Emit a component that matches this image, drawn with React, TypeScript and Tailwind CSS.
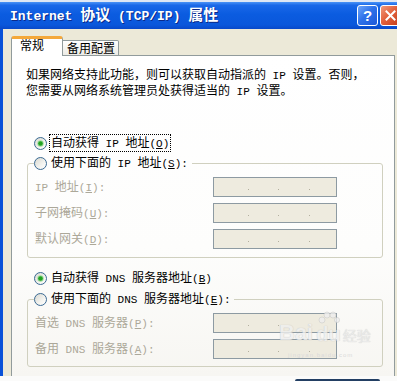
import React from "react";

const M = ({ children }: { children: React.ReactNode }) => (
  <span className="font-['Liberation_Mono',monospace] text-[11px]">{children}</span>
);

const Acc = ({ k, colon }: { k: string; colon?: boolean }) => (
  <span className="font-['Liberation_Mono',monospace] text-[11px]">
    (<span className="underline underline-offset-1">{k}</span>){colon ? ":" : ""}
  </span>
);

function Radio({ checked }: { checked?: boolean }) {
  return (
    <svg width="13" height="13" viewBox="0 0 13 13" className="shrink-0">
      <defs>
        <linearGradient id="rgrad" x1="0" y1="0" x2="1" y2="1">
          <stop offset="0" stopColor="#d6d6ce" />
          <stop offset="0.6" stopColor="#f4f4f0" />
          <stop offset="1" stopColor="#ffffff" />
        </linearGradient>
      </defs>
      <circle cx="6.5" cy="6.5" r="6" fill="url(#rgrad)" stroke="#3b6a93" strokeWidth="1" />
      {checked && (
        <>
          <circle cx="6.5" cy="6.5" r="3.2" fill="#9fdb9f" />
          <circle cx="6.5" cy="6.5" r="2.3" fill="#22a322" />
        </>
      )}
    </svg>
  );
}

function IpBox() {
  return (
    <div className="w-[124px] h-[20px] shrink-0 border border-[#8d9aa2] bg-[#eeebdf] flex items-center pt-[4px]">
      <span className="w-[34px]" />
      <span className="w-px h-px bg-[#b3af9e]" />
      <span className="w-[29px]" />
      <span className="w-px h-px bg-[#b3af9e]" />
      <span className="w-[30px]" />
      <span className="w-px h-px bg-[#b3af9e]" />
    </div>
  );
}

function Field({ label }: { label: React.ReactNode }) {
  return (
    <div className="flex items-center h-[20px]">
      <div className="w-[179px] pl-px text-[#aca899] whitespace-nowrap leading-[14px]">{label}</div>
      <IpBox />
    </div>
  );
}

export default function App() {
  return (
    <div className="w-[397px] h-[381px] overflow-hidden relative flex flex-col bg-[#ece9d8] font-['Noto_Sans_CJK_SC',sans-serif] text-[12px] text-black">
      {/* top edge */}
      <div className="h-[2px] bg-[#dfe7f4] shrink-0" />
      {/* title bar */}
      <div className="h-[27px] shrink-0 flex items-center pl-[10px] bg-[linear-gradient(to_bottom,#4a93f6_0%,#1a68e8_12%,#0b5ce0_45%,#0a57db_85%,#0849c9_100%)]">
        <div className="text-white font-bold whitespace-nowrap leading-[16px] [text-shadow:1px_1px_0_#0a2a8a]">
          <span className="font-['Liberation_Mono',monospace] text-[13px]">Internet </span>
          <span className="text-[15px]">协议</span>
          <span className="font-['Liberation_Mono',monospace] text-[13px]"> (TCP/IP) </span>
          <span className="text-[15px]">属性</span>
        </div>
        <div className="ml-auto flex items-center gap-[2px] -mr-[4px]">
          <div className="w-[21px] h-[21px] rounded-[3px] border border-white bg-[linear-gradient(135deg,#6ea6fa_0%,#2f72ea_45%,#1c58d8_100%)] flex items-center justify-center text-white font-bold font-['Liberation_Sans',sans-serif] text-[15px] leading-[15px]">
            ?
          </div>
          <div className="w-[21px] h-[21px] rounded-[3px] border border-white bg-[linear-gradient(135deg,#f09a7c_0%,#e2613c_45%,#c23c1a_100%)] flex items-center justify-center">
            <svg width="11" height="11" viewBox="0 0 11 11">
              <path d="M1.5 1.5 L9.5 9.5 M9.5 1.5 L1.5 9.5" stroke="#ffffff" strokeWidth="2" strokeLinecap="square" />
            </svg>
          </div>
        </div>
      </div>
      {/* body */}
      <div className="flex-1 flex min-h-0">
        <div className="w-[3px] bg-[#0a52d8] shrink-0" />
        <div className="flex-1 flex flex-col pl-[8px] pr-[2px] pt-[7px] min-w-0">
          {/* tabs */}
          <div className="flex items-end h-[20px] shrink-0">
            <div className="w-[52px] h-[20px] shrink-0 bg-white border-l border-r border-[#919b9c] border-t-[3px] border-t-[#f4a83a] rounded-t-[3px] pl-[8px] leading-[12px] pt-[0px]">
              常规
            </div>
            <div className="w-[56px] h-[16px] shrink-0 bg-[linear-gradient(to_bottom,#ffffff,#ecebe5)] border-t border-r border-b border-[#919b9c] rounded-tr-[2px] flex items-center pl-[4px] leading-[12px]">
              备用配置
            </div>
            <div className="flex-1 h-px bg-[#919b9c]" />
          </div>
          {/* panel */}
          <div className="flex-1 bg-[linear-gradient(to_bottom,#ffffff_0%,#fdfdfc_60%,#f7f6f2_100%)] border-l border-r border-[#919b9c] flex flex-col">
            <div className="mt-[11px] ml-[14px] leading-[13px] whitespace-nowrap">
              如果网络支持此功能，则可以获取自动指派的<M> IP </M>设置。否则，
              <br />
              您需要从网络系统管理员处获得适当的<M> IP </M>设置。
            </div>

            <div className="mt-[36px] ml-[22px] h-[16px] flex items-center gap-[2px]">
              <Radio checked />
              <span className="border border-dotted border-black px-px leading-[14px] whitespace-nowrap">
                自动获得<M> IP </M>地址<Acc k="O" />
              </span>
            </div>

            <fieldset className="mt-[4px] ml-[15px] mr-[11px] border border-[#d0d0bf] rounded-[3px] pl-[6px]">
              <legend className="h-[16px] flex items-center gap-[4px] pr-[4px] whitespace-nowrap leading-[14px]">
                <Radio />
                <span>
                  使用下面的<M> IP </M>地址<Acc k="S" colon />
                </span>
              </legend>
              <div className="flex flex-col gap-[6px] pt-[6px] pb-[8px]">
                <Field
                  label={
                    <>
                      <M>IP </M>地址<Acc k="I" colon />
                    </>
                  }
                />
                <Field
                  label={
                    <>
                      子网掩码<Acc k="U" colon />
                    </>
                  }
                />
                <Field
                  label={
                    <>
                      默认网关<Acc k="D" colon />
                    </>
                  }
                />
              </div>
            </fieldset>

            <div className="mt-[12px] ml-[22px] h-[16px] flex items-center gap-[4px] whitespace-nowrap leading-[14px]">
              <Radio checked />
              <span>
                自动获得<M> DNS </M>服务器地址<Acc k="B" />
              </span>
            </div>

            <fieldset className="mt-[5px] ml-[15px] mr-[11px] border border-[#d0d0bf] rounded-[3px] pl-[6px]">
              <legend className="h-[16px] flex items-center gap-[4px] pr-[4px] whitespace-nowrap leading-[14px]">
                <Radio />
                <span>
                  使用下面的<M> DNS </M>服务器地址<Acc k="E" colon />
                </span>
              </legend>
              <div className="flex flex-col gap-[6px] pt-[6px] pb-[7px]">
                <Field
                  label={
                    <>
                      首选<M> DNS </M>服务器<Acc k="P" colon />
                    </>
                  }
                />
                <Field
                  label={
                    <>
                      备用<M> DNS </M>服务器<Acc k="A" colon />
                    </>
                  }
                />
              </div>
            </fieldset>
          </div>
        </div>
      </div>
      {/* bottom strip */}
      <div className="h-[5px] shrink-0 bg-[#fbfbfa] pl-[295px] pt-[3px]">
        <div className="w-[85px] h-[2px] bg-[#233f63] rounded-t-[2px]" />
      </div>

      {/* Baidu watermark */}
      <div className="absolute left-[279px] top-[322px] flex items-end pointer-events-none select-none opacity-80">
        <span className="font-['Liberation_Sans',sans-serif] font-bold text-[22px] leading-[22px] text-[#efefef] [text-shadow:0_0_1px_#b5b5b5]">
          Bai
        </span>
        <span className="relative font-['Liberation_Sans',sans-serif] font-bold text-[20px] leading-[20px] text-[#efefef] [text-shadow:0_0_1px_#b5b5b5] ml-[3px]">
          du
          <svg className="absolute left-[2px] -top-[13px]" width="22" height="14" viewBox="0 0 22 14">
            <circle cx="4" cy="9" r="3" fill="#eeeeee" stroke="#c4c4c4" strokeWidth="0.6" />
            <circle cx="9" cy="4" r="3" fill="#eeeeee" stroke="#c4c4c4" strokeWidth="0.6" />
            <circle cx="15" cy="4" r="3" fill="#eeeeee" stroke="#c4c4c4" strokeWidth="0.6" />
            <circle cx="19" cy="9" r="2.6" fill="#eeeeee" stroke="#c4c4c4" strokeWidth="0.6" />
          </svg>
        </span>
        <span className="text-[14px] leading-[16px] text-[#e8e8e8] [text-shadow:0_0_1px_#bdbdbd] ml-[2px] mb-[1px]">
          经验
        </span>
      </div>
      <div className="absolute left-[288px] top-[352px] text-[6px] leading-[6px] text-[#dadada] font-['Liberation_Sans',sans-serif] tracking-[1px] pointer-events-none">
        jingyan.baidu.com
      </div>
    </div>
  );
}
